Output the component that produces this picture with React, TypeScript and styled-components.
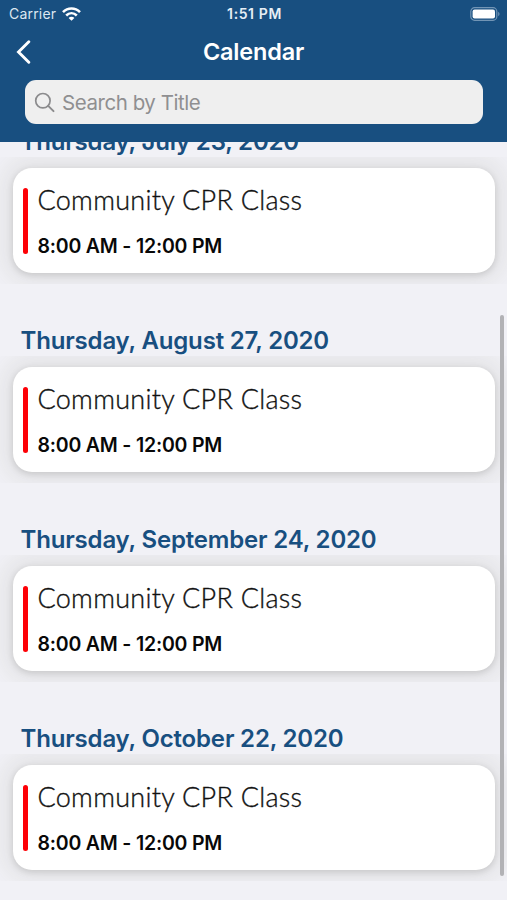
import React from 'react';
import styled, { createGlobalStyle } from 'styled-components';

const GlobalStyle = createGlobalStyle`
  * { box-sizing: border-box; }
  body { margin: 0; background: #f1f1f6; font-family: Inter, "Liberation Sans", sans-serif; }
`;

const Screen = styled.main`
  position: relative;
  display: flex;
  flex-direction: column;
  width: 507px;
  height: 900px;
  overflow: hidden;
  background: #f1f1f6;
`;

const Header = styled.header`
  flex: none;
  height: 142.4px;
  background: #184f80;
  color: #fff;
`;

const StatusBar = styled.div`
  display: grid;
  grid-template-columns: 1fr auto 1fr;
  align-items: center;
  height: 27px;
  padding: 0 7px 0 9px;
`;

const Carrier = styled.div`
  display: flex;
  align-items: center;
  gap: 6px;
  font-size: 14px;
  letter-spacing: 0.2px;
  color: #dce7f1;
`;

const Clock = styled.time`
  font-size: 14px;
  font-weight: 600;
  letter-spacing: 0.6px;
  color: #e6eef5;
`;

const Battery = styled.svg`
  justify-self: end;
`;

const NavBar = styled.div`
  display: grid;
  grid-template-columns: 60px 1fr 60px;
  align-items: center;
  height: 49px;
`;

const BackButton = styled.button`
  display: flex;
  padding: 0 0 0 15px;
  border: 0;
  background: none;
  color: inherit;
`;

const NavTitle = styled.h1`
  margin: 0;
  font-size: 23.5px;
  font-weight: 600;
  line-height: 30px;
  letter-spacing: -0.2px;
  text-align: center;
`;

const SearchField = styled.label`
  display: flex;
  align-items: center;
  gap: 6px;
  height: 44px;
  margin: 4.4px 24.5px 0 25px;
  padding: 1px 9px 0;
  border-radius: 11px;
  background: #efefef;
  color: #8b8b8d;
`;

const SearchInput = styled.input`
  flex: 1;
  min-width: 0;
  padding: 0;
  border: 0;
  outline: 0;
  background: transparent;
  font: 400 20.5px/28px Inter, "Liberation Sans", sans-serif;
  letter-spacing: -0.45px;
  &::placeholder { color: #8f8f91; opacity: 1; }
`;

const EventList = styled.div`
  flex: 1;
  min-height: 0;
  overflow: hidden;
`;

const ListContent = styled.div`
  margin-top: -57.3px;
`;

const DateHeading = styled.h2`
  display: flex;
  align-items: flex-end;
  height: 72px;
  margin: 0;
  padding: 0 20.5px 0.4px;
  font-size: 24px;
  font-weight: 600;
  line-height: 30px;
  letter-spacing: -0.17px;
  color: #184f80;
`;

const EventCell = styled.div`
  height: 127.1px;
  padding: 10.5px 12.5px 11.6px;
  overflow: hidden;
`;

const EventCard = styled.article`
  display: flex;
  gap: 10px;
  height: 105px;
  padding: 20px 10px 19px;
  border-radius: 19px;
  background: #fff;
  box-shadow: 0 2px 7px rgba(0, 0, 0, 0.14), 0 0 22px 12px rgba(70, 70, 35, 0.07);
`;

const Accent = styled.span`
  flex: none;
  width: 5px;
  border-radius: 2.5px;
  background: #fd0006;
`;

const EventText = styled.div`
  display: flex;
  flex-direction: column;
  justify-content: space-between;
`;

const EventTitle = styled.h3`
  margin: -3.5px 0 0;
  font: 300 27px/32px Lato, "Open Sans", sans-serif;
  letter-spacing: 0.28px;
  color: #111;
  -webkit-text-stroke: 0.35px #111;
`;

const EventTime = styled.p`
  margin: 0 0 -4.6px;
  font-size: 19.5px;
  font-weight: 600;
  line-height: 24px;
  letter-spacing: -0.2px;
  color: #080808;
`;

const ScrollThumb = styled.div`
  position: absolute;
  top: 315px;
  right: 3.5px;
  width: 4px;
  height: 561px;
  border-radius: 2px;
  background: #b2b2b5;
`;

const events = [
  'Thursday, July 23, 2020',
  'Thursday, August 27, 2020',
  'Thursday, September 24, 2020',
  'Thursday, October 22, 2020',
].map((date) => ({ date, title: 'Community CPR Class', time: '8:00 AM - 12:00 PM' }));

const WifiIcon = () => (
  <svg width="19" height="14" viewBox="0 0 19 14" fill="none" stroke="#fff" strokeWidth="2.6">
    <path d="M1 5.1C5.8.3 13.2.3 18 5.1" />
    <path d="M4.2 8.5c3.1-3 7.5-3 10.6 0" />
    <path d="M9.5 13.8 6.6 10.9c1.6-1.5 4.2-1.5 5.8 0Z" fill="#fff" stroke="none" />
  </svg>
);

const BatteryIcon = () => (
  <Battery width="30" height="14" viewBox="0 0 30 14">
    <rect x="0.8" y="0.7" width="26" height="12.6" rx="3.8" fill="none" stroke="#7295b5" strokeWidth="1.2" />
    <rect x="2.6" y="2.5" width="22.4" height="9" rx="2" fill="#fff" />
    <path d="M28.2 4.8c1.8.7 1.8 3.7 0 4.4Z" fill="#7295b5" />
  </Battery>
);

const BackIcon = () => (
  <svg width="17" height="24" viewBox="0 0 17 24" fill="none" stroke="#fff" strokeWidth="2.9" strokeLinecap="round" strokeLinejoin="miter">
    <path d="M13.8 1.8 3.5 12l10.3 10.2" />
  </svg>
);

const SearchIcon = () => (
  <svg width="22" height="22" viewBox="0 0 22 22" fill="none" stroke="currentColor" strokeWidth="1.7" strokeLinecap="round">
    <circle cx="8.9" cy="8.7" r="7.2" />
    <path d="m14.2 13.9 5.3 5.2" strokeWidth="2" />
  </svg>
);

export default function App() {
  return (
    <>
      <GlobalStyle />
      <Screen>
        <Header>
          <StatusBar>
            <Carrier>Carrier<WifiIcon /></Carrier>
            <Clock>1:51 PM</Clock>
            <BatteryIcon />
          </StatusBar>
          <NavBar>
            <BackButton aria-label="Back"><BackIcon /></BackButton>
            <NavTitle>Calendar</NavTitle>
          </NavBar>
          <SearchField>
            <SearchIcon />
            <SearchInput placeholder="Search by Title" />
          </SearchField>
        </Header>
        <EventList>
          <ListContent>
            {events.map((event) => (
              <section key={event.date}>
                <DateHeading>{event.date}</DateHeading>
                <EventCell>
                  <EventCard>
                    <Accent />
                    <EventText>
                      <EventTitle>{event.title}</EventTitle>
                      <EventTime>{event.time}</EventTime>
                    </EventText>
                  </EventCard>
                </EventCell>
              </section>
            ))}
          </ListContent>
        </EventList>
        <ScrollThumb />
      </Screen>
    </>
  );
}
